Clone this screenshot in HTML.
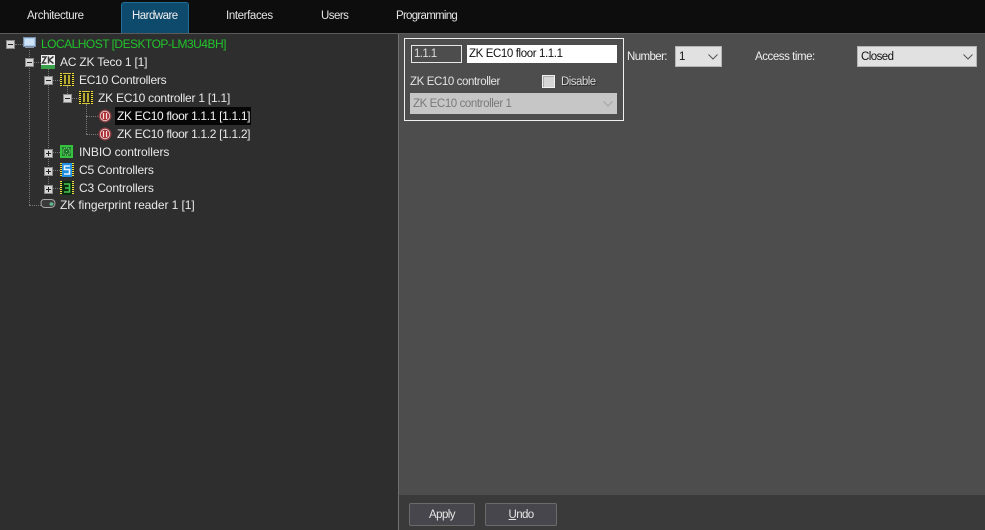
<!DOCTYPE html>
<html><head><meta charset="utf-8"><style>
html,body{margin:0;padding:0;background:#4d4d4d}
#r{position:relative;width:985px;height:530px;overflow:hidden;font:12px "Liberation Sans",sans-serif;color:#e6e6e6;background:#4d4d4d}
.a{position:absolute;white-space:nowrap}
.t{position:absolute;white-space:nowrap;line-height:16px;height:16px;color:#e8e8e8;font-size:12px}
.s{font-size:11.5px;margin-top:1px;color:#eee}
.tab{position:absolute;top:9px;line-height:14px;font-size:11.5px;color:#e4e4e4}
.box{position:absolute;width:7px;height:7px;background:#d4d4d4;border:1px solid #8a8a8a;box-sizing:content-box}
.box:before{content:"";position:absolute;left:1px;top:3px;width:5px;height:1px;background:#222}
.plus:after{content:"";position:absolute;left:3px;top:1px;width:1px;height:5px;background:#222}
.v{position:absolute;width:0;border-left:1px dotted #777}
.h{position:absolute;height:0;border-top:1px dotted #777}
svg{position:absolute}
.sel{position:absolute;background:#e1e1e1;color:#111;border:1px solid #b4b4b4;box-sizing:border-box;line-height:21px;padding-left:3px;font-size:11.5px}
.btn{position:absolute;top:503px;height:23px;box-sizing:border-box;border:1px solid #6b6b6b;border-radius:2px;background:#46464c;text-align:center;line-height:22px;color:#e6e6e6;font-size:11.5px}
</style></head><body><div id="r">
<div class="a" style="left:0;top:0;width:985px;height:33px;background:#0d0d0d"></div>
<div class="a" style="left:121px;top:2px;width:68px;height:31px;box-sizing:border-box;background:#0e4a6c;border:1px solid #1f6f98;border-bottom:0;border-radius:3px 3px 0 0"></div>
<div class="tab" style="left:27px;letter-spacing:-.39px">Architecture</div>
<div class="tab" style="left:132px;color:#eee;letter-spacing:-.53px">Hardware</div>
<div class="tab" style="left:226px;letter-spacing:-.38px">Interfaces</div>
<div class="tab" style="left:321px;letter-spacing:-.53px">Users</div>
<div class="tab" style="left:396px;letter-spacing:-.72px">Programming</div>
<div class="a" style="left:0;top:33px;width:985px;height:1px;background:#5a5a5a"></div>
<div class="a" style="left:0;top:34px;width:398px;height:496px;background:#2e2e2e"></div>
<div class="a" style="left:398px;top:34px;width:1px;height:496px;background:#707070"></div>
<div class="a" style="left:399px;top:495px;width:586px;height:35px;background:#3a3a3a"></div>

<div class="v" style="left:29px;top:50px;height:155px"></div>
<div class="v" style="left:48px;top:68px;height:120px"></div>
<div class="v" style="left:67px;top:86px;height:12px"></div>
<div class="v" style="left:86px;top:104px;height:30px"></div>
<div class="h" style="left:15px;top:44px;width:8px"></div>
<div class="h" style="left:34px;top:62px;width:7px"></div>
<div class="h" style="left:53px;top:80px;width:7px"></div>
<div class="h" style="left:72px;top:98px;width:7px"></div>
<div class="h" style="left:86px;top:116px;width:12px"></div>
<div class="h" style="left:86px;top:134px;width:12px"></div>
<div class="h" style="left:53px;top:152px;width:7px"></div>
<div class="h" style="left:53px;top:170px;width:7px"></div>
<div class="h" style="left:53px;top:188px;width:7px"></div>
<div class="h" style="left:29px;top:205px;width:12px"></div>

<div class="box" style="left:6px;top:40px"></div>
<div class="box" style="left:25px;top:58px"></div>
<div class="box" style="left:44px;top:76px"></div>
<div class="box" style="left:63px;top:94px"></div>
<div class="box plus" style="left:44px;top:149px"></div>
<div class="box plus" style="left:44px;top:167px"></div>
<div class="box plus" style="left:44px;top:185px"></div>

<svg style="left:23px;top:37px" width="13" height="12" viewBox="0 0 13 12"><rect x=".5" y=".5" width="12" height="9" fill="#a9cdf0" stroke="#7d8fa8"/><rect x="2" y="2" width="9" height="6" fill="#cfe3f7"/><rect x="2" y="10" width="9" height="1" fill="#8a97a8"/></svg>
<svg style="left:41px;top:55px" width="14" height="14" viewBox="0 0 14 14"><rect width="14" height="10" fill="#f0f0f0"/><path d="M1 2h4L1.500 8H5.500M7.500 1.500V8.500M12.500 1.500L8 5l4.500 3.500" fill="none" stroke="#3a3a3a" stroke-width="1.500"/><rect y="10" width="14" height="4" fill="#3aa14a"/></svg>
<svg style="left:60px;top:73px" width="14" height="13" viewBox="0 0 14 13"><rect width="14" height="13" fill="#26261a"/><path d="M1 0v13M13 0v13" stroke="#f2e23e" stroke-width="2" stroke-dasharray="1 1"/><rect x="3" y="0" width="8" height="1" fill="#d8ca3c"/><rect x="3" y="12" width="8" height="1" fill="#d8ca3c"/><rect x="4" y="2" width="2" height="9" fill="#b8ab34"/><rect x="8" y="2" width="2" height="9" fill="#b8ab34"/></svg>
<svg style="left:79px;top:91px" width="14" height="13" viewBox="0 0 14 13"><rect width="14" height="13" fill="#26261a"/><path d="M1 0v13M13 0v13" stroke="#f2e23e" stroke-width="2" stroke-dasharray="1 1"/><rect x="3" y="0" width="8" height="1" fill="#d8ca3c"/><rect x="3" y="12" width="8" height="1" fill="#d8ca3c"/><rect x="4" y="2" width="2" height="9" fill="#b8ab34"/><rect x="8" y="2" width="2" height="9" fill="#b8ab34"/></svg>
<svg style="left:98px;top:109px" width="14" height="14" viewBox="0 0 14 14"><circle cx="7" cy="7" r="6.500" fill="#8a3a3e"/><circle cx="7" cy="7" r="5.200" fill="#dcc4c4"/><circle cx="7" cy="7" r="4.200" fill="#a8262e"/><path d="M5.500 4v6M8.500 4v6" stroke="#f4dede" stroke-width="1.300"/></svg>
<svg style="left:98px;top:127px" width="14" height="14" viewBox="0 0 14 14"><circle cx="7" cy="7" r="6.500" fill="#8a3a3e"/><circle cx="7" cy="7" r="5.200" fill="#dcc4c4"/><circle cx="7" cy="7" r="4.200" fill="#a8262e"/><path d="M5.500 4v6M8.500 4v6" stroke="#f4dede" stroke-width="1.300"/></svg>
<svg style="left:60px;top:145px" width="13" height="13" viewBox="0 0 13 13"><rect width="13" height="13" fill="#35c23f"/><rect x="2" y="2" width="9" height="9" fill="#1e7a2a"/><circle cx="6.500" cy="6.500" r="3.500" fill="none" stroke="#7ccf80" stroke-width="1.500" stroke-dasharray="1 1"/><rect x="6" y="6" width="1" height="1" fill="#8ad98e"/></svg>
<svg style="left:60px;top:163px" width="14" height="14" viewBox="0 0 14 14"><path d="M1 0v14M13 0v14" stroke="#f2e23e" stroke-width="2" stroke-dasharray="1 1"/><rect x="2" width="10" height="14" fill="#1f8ee0"/><path d="M10 3H4.500v3.500H9.500V11H4" fill="none" stroke="#e6f3ff" stroke-width="1.600"/></svg>
<svg style="left:60px;top:181px" width="14" height="14" viewBox="0 0 14 14"><path d="M1 0v14M13 0v14" stroke="#f2e23e" stroke-width="2" stroke-dasharray="1 1"/><rect x="2" width="10" height="14" fill="#0c2a10"/><path d="M4 3h5.500v8H4M5 7h4" fill="none" stroke="#43c24f" stroke-width="1.600"/></svg>
<svg style="left:40px;top:198px" width="16" height="12" viewBox="0 0 16 12"><path d="M4 1.500h7c3 0 4 2 4 4s-1.500 4-4 4H5C2 9.500 1 7 1 5c0-2 1.200-3.500 3-3.500z" fill="#3a3a3a" stroke="#a8a8a8"/><ellipse cx="11.500" cy="6" rx="2" ry="1.800" fill="#5fb58c"/></svg>

<div class="t" style="left:41px;top:36px;color:#21c42b;letter-spacing:-.52px">LOCALHOST [DESKTOP-LM3U4BH]</div>
<div class="t" style="left:60px;top:54px;letter-spacing:-.2px">AC ZK Teco 1 [1]</div>
<div class="t" style="left:79px;top:72px;letter-spacing:-.25px">EC10 Controllers</div>
<div class="t" style="left:98px;top:90px;letter-spacing:-.23px">ZK EC10 controller 1 [1.1]</div>
<div class="a" style="left:115px;top:107px;width:136px;height:18px;background:#060606"></div>
<div class="t" style="left:117px;top:108px;color:#f4f4f4;letter-spacing:-.33px">ZK EC10 floor 1.1.1 [1.1.1]</div>
<div class="t" style="left:117px;top:126px;letter-spacing:-.33px">ZK EC10 floor 1.1.2 [1.1.2]</div>
<div class="t" style="left:79px;top:144px;letter-spacing:-.06px">INBIO controllers</div>
<div class="t" style="left:79px;top:162px;letter-spacing:-.14px">C5 Controllers</div>
<div class="t" style="left:79px;top:180px;letter-spacing:-.14px">C3 Controllers</div>
<div class="t" style="left:60px;top:197px;letter-spacing:-.08px">ZK fingerprint reader 1 [1]</div>

<div class="a" style="left:404px;top:38px;width:220px;height:83px;box-sizing:border-box;border:1px solid #f0f0f0"></div>
<div class="a" style="left:411px;top:45px;width:51px;height:18px;box-sizing:border-box;border:1px solid #e8e8e8;line-height:17px;padding-left:2px;font-size:11.5px;color:#ddd;letter-spacing:-.6px">1.1.1</div>
<div class="a" style="left:467px;top:45px;width:150px;height:18px;background:#fff;color:#111;line-height:19px;padding-left:2px;box-sizing:border-box;font-size:11.5px;letter-spacing:-.39px">ZK EC10 floor 1.1.1</div>
<div class="t s" style="left:410px;top:73px;color:#e4e4e4;letter-spacing:-.4px">ZK EC10 controller</div>
<div class="a" style="left:542px;top:75px;width:13px;height:13px;box-sizing:border-box;background:#d6d6d6;border:1px solid #f2f2f2;box-shadow:inset 1px 1px 0 #aaa"></div>
<div class="t s" style="left:561px;top:73px;color:#d8d8d8;text-shadow:1px 1px 0 #2c2c2c;letter-spacing:-.53px">Disable</div>
<div class="a" style="left:410px;top:93px;width:207px;height:21px;background:#c6c6c6;color:#7a7a7a;line-height:22px;padding-left:3px;box-sizing:border-box;font-size:11.5px;letter-spacing:-.41px">ZK EC10 controller 1</div>
<svg style="left:603px;top:101px" width="10" height="6" viewBox="0 0 10 6"><path d="M.5.500L5 5 9.500.500" fill="none" stroke="#a4a4a4"/></svg>

<div class="t s" style="left:627px;top:48px;letter-spacing:-.6px">Number:</div>
<div class="sel" style="left:675px;top:46px;width:47px;height:21px">1</div>
<svg style="left:708px;top:54px" width="10" height="6" viewBox="0 0 10 6"><path d="M.5.500L5 5 9.500.500" fill="none" stroke="#555"/></svg>
<div class="t s" style="left:755px;top:48px;letter-spacing:-.45px">Access time:</div>
<div class="sel" style="left:857px;top:46px;width:120px;height:21px;letter-spacing:-.55px">Closed</div>
<svg style="left:963px;top:54px" width="10" height="6" viewBox="0 0 10 6"><path d="M.5.500L5 5 9.500.500" fill="none" stroke="#555"/></svg>

<div class="btn" style="left:409px;width:66px;letter-spacing:-.55px">Apply</div>
<div class="btn" style="left:485px;width:72px;letter-spacing:-.65px"><u>U</u>ndo</div>
</div></body></html>
